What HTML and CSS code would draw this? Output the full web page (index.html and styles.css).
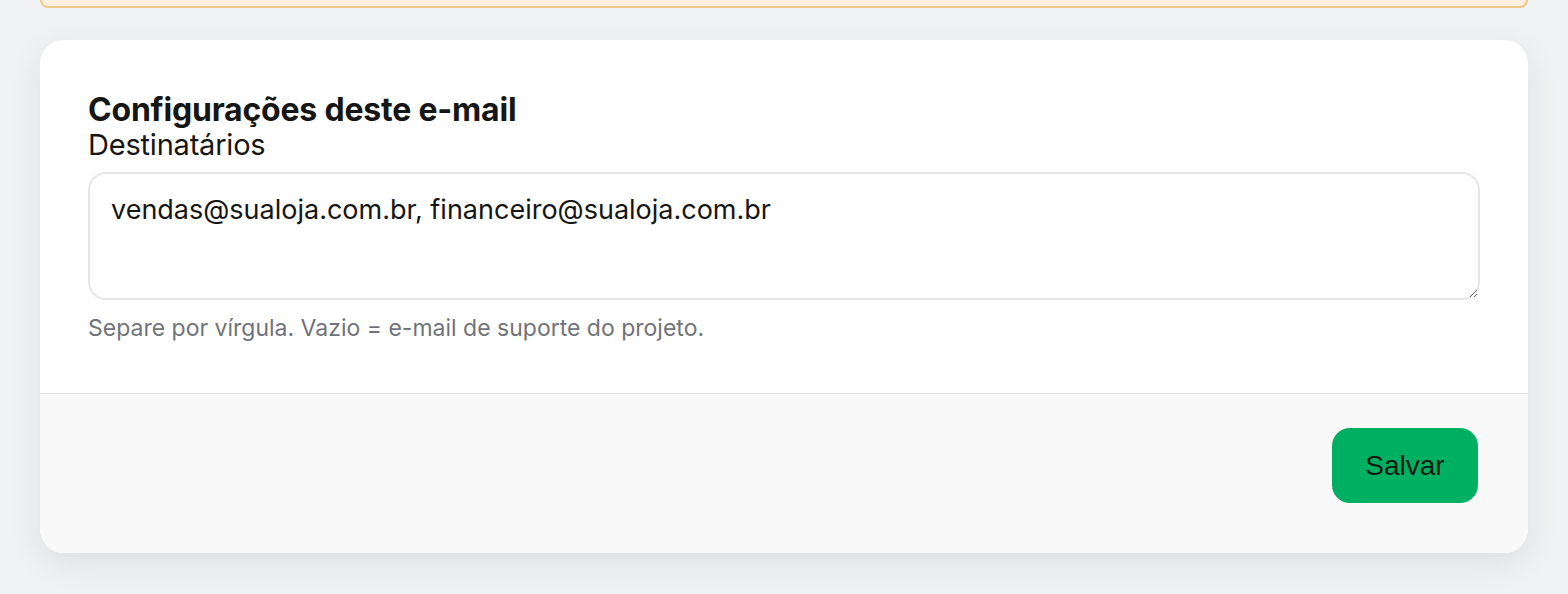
FILE: index.html
```html
<!DOCTYPE html>
<html lang="pt-BR">
<head>
  <meta charset="UTF-8" />
  <meta name="viewport" content="width=device-width, initial-scale=1.0"/>
  <title>Configurações deste e-mail</title>
  <link rel="stylesheet" href="styles.css">
</head>
<body>

  <!-- Aviso (fim do bloco acima) -->
  <div class="notice"></div>

  <div class="card">
    <div class="card-body">
      <h2>Configurações deste e-mail</h2>
      <label for="recipients">Destinatários</label>
      <textarea id="recipients">vendas@sualoja.com.br, financeiro@sualoja.com.br</textarea>
      <p class="hint">Separe por vírgula. Vazio = e-mail de suporte do projeto.</p>
    </div>

    <div class="card-footer">
      <button class="save-btn">Salvar</button>
    </div>
  </div>

</body>
</html>
```

FILE: styles.css
```css
body {
  font-family: Inter, "Noto Sans", sans-serif;
  background-color: #f1f2f4;
  margin: 0;
  padding: 0 40px 60px;
  color: #1a1a1a;
}

.notice {
  height: 6px;
  background-color: #fbf0dd;
  border: 2px solid #efc98b;
  border-top: none;
  border-radius: 0 0 24px 24px;
}

.card {
  margin-top: 32px;
  background-color: #fff;
  border-radius: 24px;
  box-shadow: 0 10px 32px rgba(20, 30, 50, 0.09);
  overflow: hidden;
}

.card-body {
  padding: 52px 48px 51px;
}

h2 {
  margin: 0;
  font-size: 32px;
  line-height: 36px;
  font-weight: 700;
  letter-spacing: -0.2px;
  color: #161616;
}

label {
  display: block;
  padding-top: 1px;
  font-size: 29px;
  line-height: 31px;
  letter-spacing: -0.2px;
  color: #161616;
}

textarea {
  display: block;
  box-sizing: border-box;
  width: 100%;
  height: 128px;
  margin-top: 12px;
  padding: 20px 21px;
  font-family: inherit;
  font-size: 27px;
  line-height: 32px;
  color: #161616;
  border: 2px solid #e6e6e6;
  border-radius: 18px;
  resize: vertical;
  outline: none;
}

.hint {
  margin: 14px 0 0;
  font-size: 23px;
  line-height: 28px;
  color: #71737a;
}

.card-footer {
  display: flex;
  justify-content: flex-end;
  padding: 34px 50px 50px;
  background-color: #f9f9fa;
  border-top: 1px solid #e3e3e5;
}

.save-btn {
  width: 146px;
  height: 75px;
  font-family: "Liberation Sans", Arial, sans-serif;
  font-size: 28px;
  color: #0b1a10;
  background-color: #00b062;
  border: none;
  border-radius: 18px;
  cursor: pointer;
}

.save-btn:hover {
  background-color: #009c56;
}
```
